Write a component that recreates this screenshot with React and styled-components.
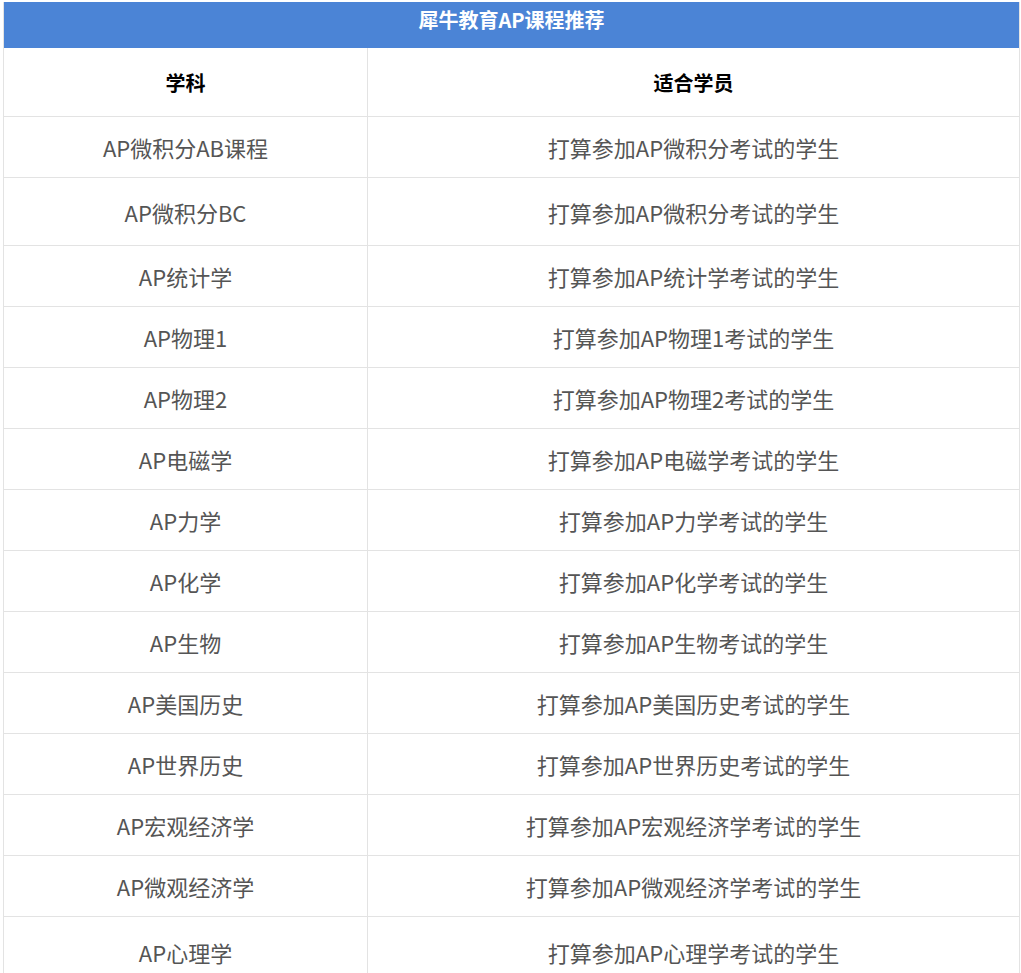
import React from 'react';
import styled, { createGlobalStyle } from 'styled-components';

const Global = createGlobalStyle`
  body { margin: 0; padding: 2px 3px 0; background: #fff; font-family: "Noto Sans CJK SC", "Noto Sans", sans-serif; }
`;

const rows = [
  ['AP微积分AB课程', '打算参加AP微积分考试的学生', 61],
  ['AP微积分BC', '打算参加AP微积分考试的学生', 68],
  ['AP统计学', '打算参加AP统计学考试的学生'],
  ['AP物理1', '打算参加AP物理1考试的学生'],
  ['AP物理2', '打算参加AP物理2考试的学生'],
  ['AP电磁学', '打算参加AP电磁学考试的学生'],
  ['AP力学', '打算参加AP力学考试的学生'],
  ['AP化学', '打算参加AP化学考试的学生'],
  ['AP生物', '打算参加AP生物考试的学生'],
  ['AP美国历史', '打算参加AP美国历史考试的学生'],
  ['AP世界历史', '打算参加AP世界历史考试的学生'],
  ['AP宏观经济学', '打算参加AP宏观经济学考试的学生'],
  ['AP微观经济学', '打算参加AP微观经济学考试的学生'],
  ['AP心理学', '打算参加AP心理学考试的学生', 70],
];

const Table = styled.div`
  width: 1015px;
  border-left: 1px solid #e3e3e3;
  border-right: 1px solid #e3e3e3;
`;

const Title = styled.div`
  height: 46px;
  background: #4b84d6;
  color: #fff;
  font-weight: bold;
  font-size: 20px;
  display: flex;
  justify-content: center;
  align-items: flex-start;
  line-height: 36px;
`;

const Row = styled.div`
  display: grid;
  grid-template-columns: 363px 1fr;
  height: ${p => p.h}px;
  border-bottom: 1px solid #e3e3e3;
  box-sizing: border-box;
`;

const Cell = styled.div`
  display: flex;
  align-items: center;
  justify-content: center;
  font-size: ${p => (p.head ? 20 : 22)}px;
  font-weight: ${p => (p.head ? 'bold' : 'normal')};
  color: ${p => (p.head ? '#000' : '#555')};
  & + & { border-left: 1px solid #e3e3e3; }
`;

export default function App() {
  return (
    <>
      <Global />
      <Table>
        <Title>犀牛教育AP课程推荐</Title>
        <Row h={69}>
          <Cell head>学科</Cell>
          <Cell head>适合学员</Cell>
        </Row>
        {rows.map(([a, b, h]) => (
          <Row key={a} h={h || 61}>
            <Cell>{a}</Cell>
            <Cell>{b}</Cell>
          </Row>
        ))}
      </Table>
    </>
  );
}
